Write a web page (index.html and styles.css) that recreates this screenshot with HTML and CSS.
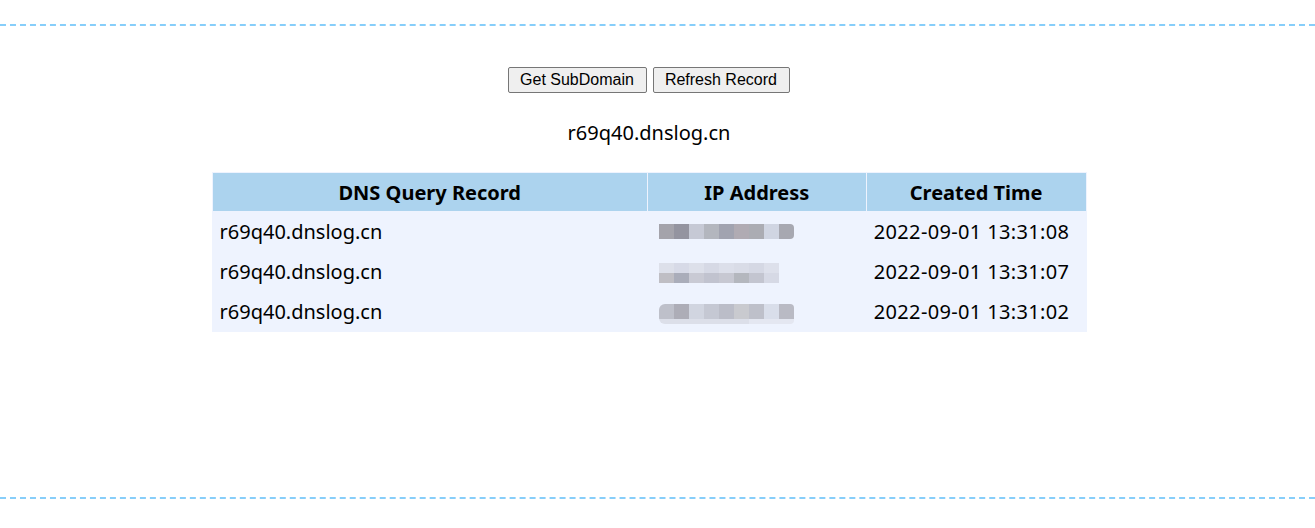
FILE: index.html
```html
<!DOCTYPE html>
<html>
<head>
<meta charset="utf-8">
<title>DNSLog</title>
<link rel="stylesheet" href="styles.css">
</head>
<body>
<div class="frame">
  <div class="content">
    <div class="actions">
      <button class="btn">Get SubDomain</button>
      <button class="btn">Refresh Record</button>
    </div>
    <div class="domain">r69q40.dnslog.cn</div>
    <table class="records">
      <thead>
        <tr>
          <th class="col-q">DNS Query Record</th>
          <th class="col-ip">IP Address</th>
          <th class="col-t">Created Time</th>
        </tr>
      </thead>
      <tbody>
        <tr>
          <td>r69q40.dnslog.cn</td>
          <td><span class="mosaic mosaic-a"></span></td>
          <td class="time">2022-09-01 13:31:08</td>
        </tr>
        <tr>
          <td>r69q40.dnslog.cn</td>
          <td><span class="mosaic mosaic-b"></span></td>
          <td class="time">2022-09-01 13:31:07</td>
        </tr>
        <tr>
          <td>r69q40.dnslog.cn</td>
          <td><span class="mosaic mosaic-c"></span></td>
          <td class="time">2022-09-01 13:31:02</td>
        </tr>
      </tbody>
    </table>
  </div>
</div>
</body>
</html>
```

FILE: styles.css
```css
html, body {
  margin: 0;
  padding: 0;
  background: #ffffff;
}

body {
  font-family: "Noto Sans", "Open Sans", sans-serif;
  color: #000;
}

.frame {
  margin-top: 24px;
  height: 471px;
  border-top: 2px dashed #87cefa;
  border-bottom: 2px dashed #87cefa;
}

.content {
  width: 1298px;
  display: flex;
  flex-direction: column;
  align-items: center;
  padding-top: 41px;
}

.actions {
  display: flex;
  gap: 6px;
}

.btn {
  font-family: "Liberation Sans", Arial, sans-serif;
  font-size: 16px;
  height: 26px;
  padding: 0 12px 0 11px;
  background: #efefef;
  border: 1px solid #767676;
  border-radius: 2px;
  color: #000;
}

.domain {
  margin-top: 26px;
  font-size: 20px;
  line-height: 28px;
}

.records {
  margin-top: 25px;
  width: 875px;
  border-collapse: collapse;
  font-size: 20px;
}

.records th,
.records td {
  border: 1px solid #eef3fe;
  height: 39px;
  padding: 0 7px;
  box-sizing: border-box;
}

.records th {
  background: #acd3ee;
  font-weight: bold;
  text-align: center;
}

.records td {
  background: #eef3fe;
  text-align: left;
  height: 40px;
}

.records td.time {
  letter-spacing: 0.35px;
}

.col-q { width: 436px; }
.col-ip { width: 219px; }
.col-t { width: 220px; }

.mosaic {
  display: block;
  width: 135px;
  height: 15px;
  margin-left: 4px;
}

.mosaic-a {
  background: linear-gradient(to right,
    #a4a3ab 0 15px, #9494a0 15px 30px, #c6c9d5 30px 45px, #b3b6be 45px 60px,
    #a1a3b0 60px 75px, #b0abb3 75px 90px, #abacb3 90px 105px, #d0d5e2 105px 120px,
    #a7a8b1 120px 135px);
  border-radius: 0 4px 4px 0;
}

.mosaic-b {
  width: 120px;
  height: 20px;
  margin-top: 2px;
  background:
    linear-gradient(to right,
      #dde0ea 0 15px, #d7dae7 15px 30px, #dde0ea 30px 45px, #d6d9e5 45px 60px,
      #dcdfea 60px 75px, #d9dce7 75px 90px, #d5d8e4 90px 105px, #dde0eb 105px 120px) top / 100% 10px no-repeat,
    linear-gradient(to right,
      #bfbec4 0 15px, #aaadba 15px 30px, #c9cad4 30px 45px, #c1c3cf 45px 60px,
      #c7c8d2 60px 75px, #b4b7be 75px 90px, #c3c5d0 90px 105px, #d6d9e5 105px 120px) bottom / 100% 10px no-repeat;
}

.mosaic-c {
  height: 20px;
  margin-top: 5px;
  background:
    linear-gradient(to right,
      #bec0ca 0 15px, #adadb7 15px 30px, #d1d5e0 30px 45px, #c5c8d3 45px 60px,
      #bbbdc8 60px 75px, #c9cacf 75px 90px, #bec0ca 90px 105px, #d9deea 105px 120px,
      #b9bac4 120px 135px) top / 100% 15px no-repeat,
    linear-gradient(to right,
      #dcdfe9 0 90px, #e4e7f1 90px 135px) bottom / 100% 5px no-repeat;
  border-radius: 6px 4px 4px 6px;
}
```
